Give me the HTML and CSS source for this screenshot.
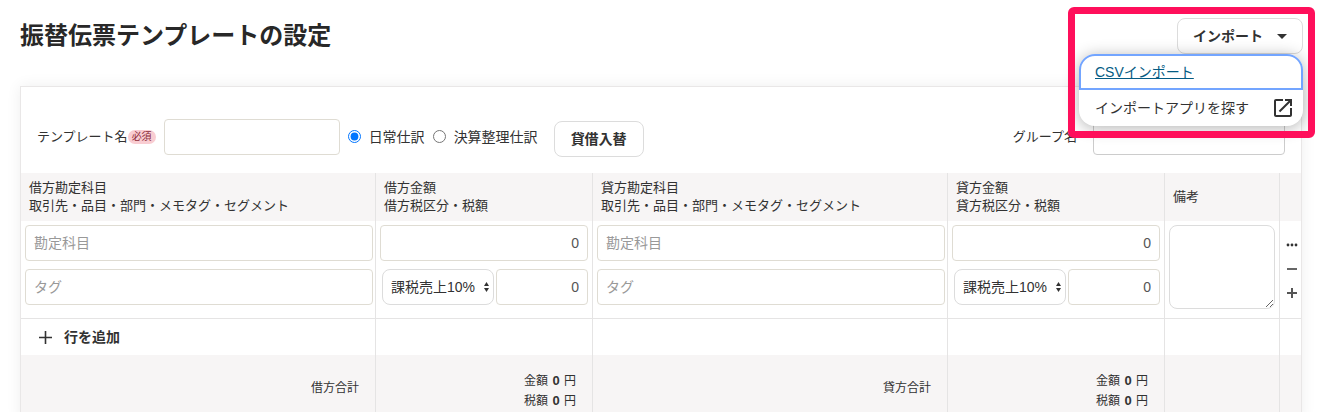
FILE: index.html
```html
<!DOCTYPE html>
<html lang="ja">
<head>
	<meta charset="UTF-8">
	<title>振替伝票テンプレートの設定</title>
	<link rel="stylesheet" href="styles.css">
</head>
<body>
	<div class="page">
		<!-- ヘッダー -->
		<header class="pageHeader">
			<h1>振替伝票テンプレートの設定</h1>
			<div class="importBox">
				<button type="button" class="btn importBtn">インポート
					<svg width="10" height="5" viewBox="0 0 10 5"><path d="M0 0h10L5 5z" fill="#323232"/></svg>
				</button>
				<ul class="importMenu">
					<li class="current"><a href="#">CSVインポート</a></li>
					<li>
						<a href="#">インポートアプリを探す
							<svg width="24" height="24" viewBox="0 0 24 24" fill="#323232"><path d="M19 19H5V5h7V3H5c-1.110 0-2 .9-2 2v14c0 1.100.89 2 2 2h14c1.100 0 2-.9 2-2v-7h-2v7zM14 3v2h3.590l-9.830 9.830 1.410 1.410L19 6.410V10h2V3h-7z"/></svg>
						</a>
					</li>
				</ul>
				<div class="highlight"></div>
			</div>
		</header>
		<!-- テンプレート -->
		<main class="card">
			<div class="toolbar">
				<label class="caption" for="tplName">テンプレート名<span class="required">必須</span></label>
				<input type="text" id="tplName" class="field nameField">
				<div class="kinds">
					<input type="radio" name="kind" id="kindDaily" checked>
					<label for="kindDaily">日常仕訳</label>
					<input type="radio" name="kind" id="kindClosing">
					<label for="kindClosing">決算整理仕訳</label>
				</div>
				<button type="button" class="btn swapBtn">貸借入替</button>
				<div class="group">
					<label class="caption" for="groupName">グループ名</label>
					<div class="selectBox groupBox">
						<select id="groupName" class="field"><option></option></select>
						<svg class="arrow" width="8" height="5" viewBox="0 0 8 5" fill="none" stroke="#888"><path d="M0 0l4 4 4-4"/></svg>
					</div>
				</div>
			</div>
			<table class="slip">
				<colgroup>
					<col class="colAccount">
					<col class="colAmount">
					<col class="colAccount">
					<col class="colAmount">
					<col class="colNote">
					<col class="colAction">
				</colgroup>
				<thead>
					<tr>
						<th>借方勘定科目<br>取引先・品目・部門・メモタグ・セグメント</th>
						<th>借方金額<br>借方税区分・税額</th>
						<th>貸方勘定科目<br>取引先・品目・部門・メモタグ・セグメント</th>
						<th>貸方金額<br>貸方税区分・税額</th>
						<th>備考</th>
						<th></th>
					</tr>
				</thead>
				<tbody>
					<tr class="entry">
						<td class="account">
							<input type="text" class="field" placeholder="勘定科目" aria-label="借方勘定科目">
							<input type="text" class="field" placeholder="タグ" aria-label="借方タグ">
						</td>
						<td class="amount">
							<input type="text" class="field num" value="0" aria-label="借方金額">
							<div class="tax">
								<div class="selectBox taxBox">
									<select class="taxSelect" aria-label="借方税区分"><option>課税売上10%</option></select>
									<svg class="arrow" width="5" height="10" viewBox="0 0 5 10"><path d="M0 4h5L2.500 0zM0 6h5L2.500 10z" fill="#323232"/></svg>
								</div>
								<input type="text" class="field num" value="0" aria-label="借方税額">
							</div>
						</td>
						<td class="account">
							<input type="text" class="field" placeholder="勘定科目" aria-label="貸方勘定科目">
							<input type="text" class="field" placeholder="タグ" aria-label="貸方タグ">
						</td>
						<td class="amount">
							<input type="text" class="field num" value="0" aria-label="貸方金額">
							<div class="tax">
								<div class="selectBox taxBox">
									<select class="taxSelect" aria-label="貸方税区分"><option>課税売上10%</option></select>
									<svg class="arrow" width="5" height="10" viewBox="0 0 5 10"><path d="M0 4h5L2.500 0zM0 6h5L2.500 10z" fill="#323232"/></svg>
								</div>
								<input type="text" class="field num" value="0" aria-label="貸方税額">
							</div>
						</td>
						<td class="note"><textarea aria-label="備考"></textarea></td>
						<td class="actions">
							<button type="button" aria-label="メニュー">
								<svg width="12" height="12" viewBox="0 0 12 12" fill="#323232"><circle cx="2" cy="6" r="1.400"/><circle cx="6" cy="6" r="1.400"/><circle cx="10" cy="6" r="1.400"/></svg>
							</button>
							<button type="button" aria-label="行を削除">
								<svg width="12" height="12" viewBox="0 0 12 12" stroke="#666" stroke-width="2"><path d="M1 6h10"/></svg>
							</button>
							<button type="button" aria-label="行を挿入">
								<svg width="12" height="12" viewBox="0 0 12 12" stroke="#555" stroke-width="2"><path d="M1 6h10M6 1v10"/></svg>
							</button>
						</td>
					</tr>
					<tr class="add">
						<td>
							<button type="button" class="addBtn">
								<svg width="13" height="13" viewBox="0 0 13 13" stroke="#323232" stroke-width="1.600"><path d="M0 6.500h13M6.500 0v13"/></svg>
								行を追加
							</button>
						</td>
						<td></td>
						<td></td>
						<td></td>
						<td></td>
						<td></td>
					</tr>
				</tbody>
				<tfoot>
					<tr>
						<td>借方合計</td>
						<td class="total">金額 <b>0</b> 円<br>税額 <b>0</b> 円</td>
						<td>貸方合計</td>
						<td class="total">金額 <b>0</b> 円<br>税額 <b>0</b> 円</td>
						<td></td>
						<td></td>
					</tr>
				</tfoot>
			</table>
		</main>
	</div>
</body>
</html>
```
FILE: styles.css
```css
*{
	margin:0;
	padding:0;
	box-sizing:border-box;
}
body{
	background:#fff;
	color:#323232;
	font-family:"Liberation Sans","Noto Sans CJK JP",sans-serif;
	font-size:14px;
	line-height:20px;
}
ul{
	list-style:none;
}
svg{
	display:block;
	flex:none;
}
input,select,textarea,button{
	font:inherit;
	color:inherit;
}
button{
	cursor:pointer;
}
.page{
	max-height:100vh;
	overflow:hidden;
	padding:18px 15px 0 20px;
}
/* ヘッダー */
.pageHeader{
	display:flex;
	justify-content:space-between;
	margin-bottom:32px;
}
.pageHeader h1{
	color:#282828;
	font-size:24px;
	line-height:36px;
}
.btn{
	height:36px;
	border:1px solid #dcdcdc;
	border-radius:8px;
	background:#fff;
	font-weight:bold;
}
.importBox{
	position:relative;
}
.importBtn{
	display:flex;
	align-items:center;
	gap:14px;
	padding:0 15px;
}
.importMenu{
	position:absolute;
	top:36px;
	right:0;
	z-index:1;
	width:224px;
	border-radius:16px;
	background:#fff;
	box-shadow:0 2px 16px rgba(0,0,0,.3);
}
.importMenu a{
	display:flex;
	align-items:center;
	justify-content:space-between;
	height:36px;
	padding:0 8px 0 16px;
	color:#323232;
	text-decoration:none;
}
.importMenu .current a{
	padding:0 14px;
	border:2px solid #73a5ff;
	border-radius:16px 16px 0 0;
	color:#045b83;
	text-decoration:underline;
}
.highlight{
	position:absolute;
	top:-11px;
	right:-12px;
	z-index:2;
	width:247px;
	height:131px;
	border:7px solid #ff0f5b;
	border-radius:6px;
	pointer-events:none;
}
/* テンプレート */
.card{
	margin-right:1px;
	border:1px solid #e9e7e7;
	border-bottom:0;
	box-shadow:0 0 14px rgba(0,0,0,.07);
}
.toolbar{
	display:flex;
	align-items:center;
	height:86px;
	padding:14px 16px 0;
}
.caption{
	display:flex;
	align-items:center;
	font-size:13px;
}
.required{
	padding:0 4px;
	border-radius:7px;
	background:#f9cdd2;
	color:#8c2b3a;
	font-size:10px;
	line-height:14px;
}
.field{
	display:block;
	width:100%;
	height:36px;
	padding:0 8px;
	border:1px solid #dfdcd3;
	border-radius:4px;
	background:#fff;
}
.field::placeholder{
	color:#999;
}
.nameField{
	width:176px;
	margin:0 8px;
}
.kinds{
	display:flex;
	align-items:center;
	gap:8px;
}
.kinds input{
	width:13px;
	height:13px;
	margin-bottom:2px;
}
.swapBtn{
	width:90px;
	margin:4px 0 0 16px;
}
.group{
	display:flex;
	align-items:center;
	gap:16px;
	margin-left:auto;
}
.selectBox{
	position:relative;
}
.selectBox select{
	appearance:none;
}
.selectBox .arrow{
	position:absolute;
	top:13px;
	right:5px;
	pointer-events:none;
}
.groupBox{
	width:192px;
}
.groupBox .field{
	border-color:#ccc;
}
.groupBox .arrow{
	top:15px;
	right:12px;
}
/* 仕訳テーブル */
.slip{
	width:100%;
	table-layout:fixed;
	border-collapse:separate;
	border-spacing:0;
}
.colAmount{
	width:217px;
}
.colNote{
	width:115px;
}
.colAction{
	width:21px;
}
.slip th,.slip td{
	border-right:1px solid #e5e4e4;
}
.slip th:last-child,.slip td:last-child{
	border-right:0;
}
.slip th{
	height:48px;
	padding:0 8px;
	background:#f7f5f5;
	font-size:13px;
	font-weight:normal;
	line-height:18px;
	text-align:left;
	white-space:nowrap;
}
.entry td{
	height:98px;
	padding:4px;
	border-bottom:1px solid #e5e4e4;
	vertical-align:top;
}
.entry .account{
	padding-right:2px;
}
.account .field + .field{
	margin-top:8px;
}
.num{
	color:#555;
	text-align:right;
}
.tax{
	display:flex;
	gap:2px;
	margin-top:8px;
	padding-left:2px;
}
.taxBox{
	flex:none;
	width:112px;
}
.taxSelect{
	display:block;
	width:100%;
	height:36px;
	padding:0 8px;
	border:1px solid #dcdcdc;
	border-radius:8px;
	background:#fff;
}
.note textarea{
	display:block;
	width:100%;
	height:84px;
	padding:8px;
	border:1px solid #dcdcdc;
	border-radius:8px;
	resize:vertical;
}
.entry .actions{
	padding:12px 0 0 2px;
}
.actions button{
	display:flex;
	align-items:center;
	justify-content:center;
	width:100%;
	height:24px;
	border:0;
	background:none;
}
.add td{
	height:36px;
}
.addBtn{
	display:flex;
	align-items:center;
	gap:12px;
	padding:0 18px;
	border:0;
	background:none;
	font-weight:bold;
}
.slip tfoot td{
	height:66px;
	padding:0 16px;
	background:#f7f5f5;
	font-size:12px;
	line-height:19px;
	text-align:right;
}
.slip tfoot .total{
	padding-top:6px;
}
.total b{
	padding:0 1px;
	font-size:13px;
}
```
